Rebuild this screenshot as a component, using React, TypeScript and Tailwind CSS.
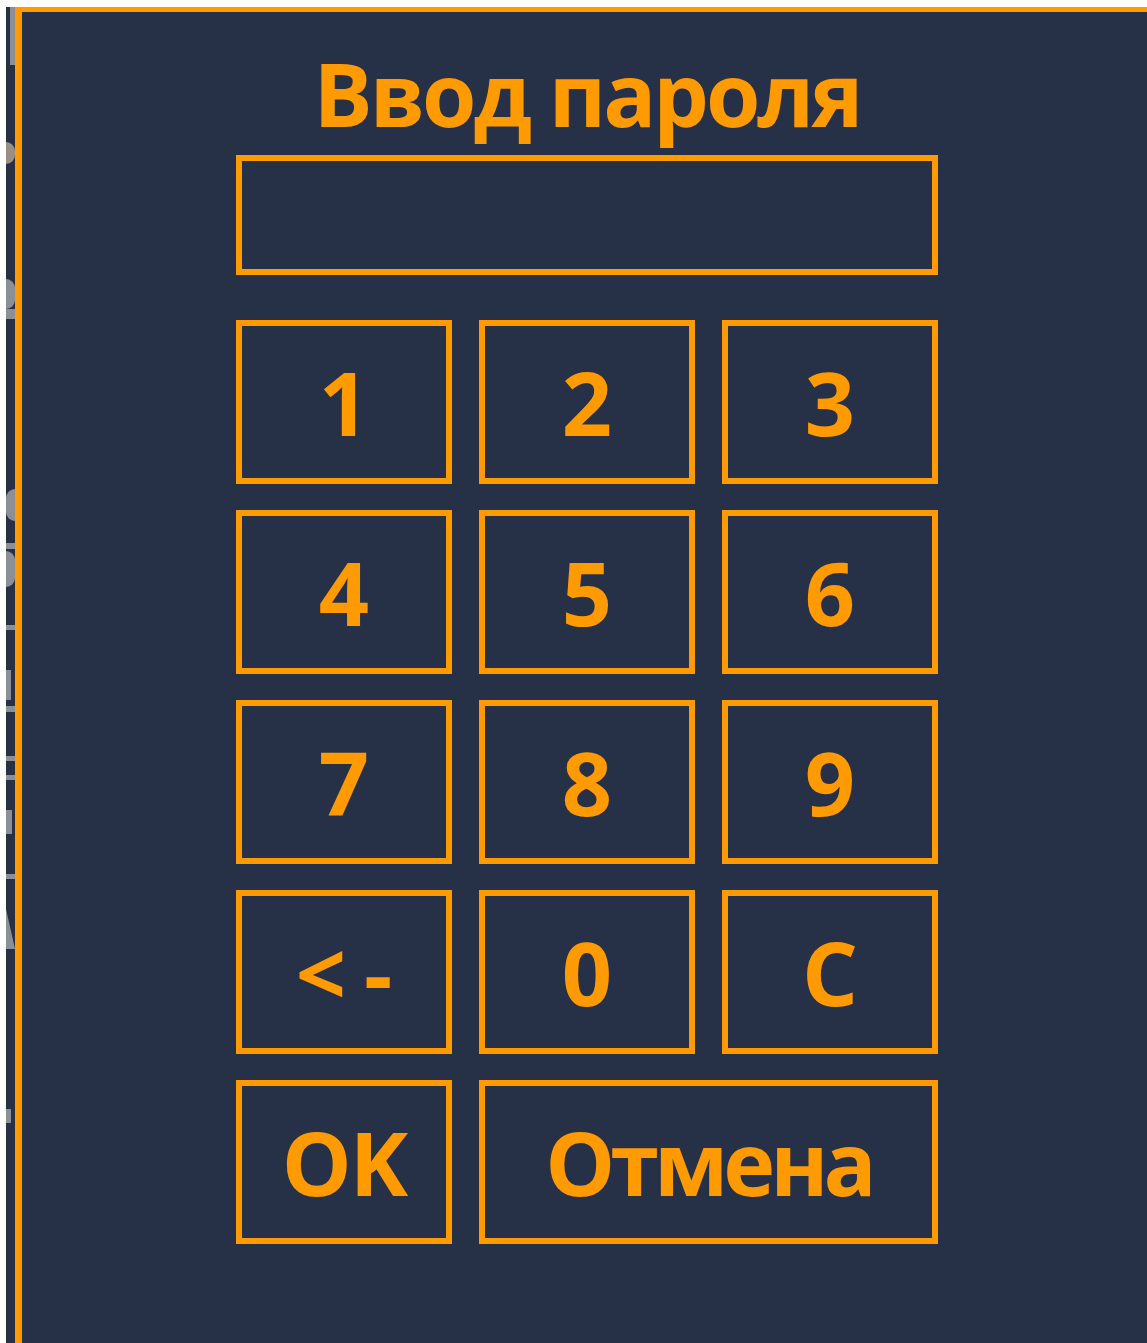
import React from 'react'

const keys = ['1', '2', '3', '4', '5', '6', '7', '8', '9', '<-', '0', 'C']

function Key({ label, className = '' }: { label: string; className?: string }) {
  return (
    <button
      type="button"
      className={`flex items-center justify-center h-[164px] border-[6px] border-[#ff9a00] bg-transparent text-[#ff9a00] text-[88px] font-bold leading-none ${className}`}
    >
      {label}
    </button>
  )
}

export default function App() {
  return (
    <div
      className="h-[1343px] overflow-hidden bg-white pt-[7px] pl-[6px]"
      style={{ fontFamily: '"Open Sans", "Noto Sans", sans-serif' }}
    >
      <div className="flex h-full">
        {/* clipped edge of the window behind the dialog */}
        <div className="relative w-[9px] shrink-0 overflow-hidden bg-[#263148]">
          <div className="absolute left-0 top-0 w-[12px] h-[1343px] flex flex-col items-start">
            <span className="block w-[5px] h-[58px] bg-[#8a8f98] ml-[4px]" />
            <span className="block w-[9px] h-[22px] rounded-r-full bg-[#9a8f88] mt-[77px]" />
            <span className="block w-[9px] h-[30px] rounded-r-full bg-[#8a8f98] mt-[115px]" />
            <span className="block w-[9px] h-[10px] bg-[#8a8f98]" />
            <span className="block w-[9px] h-[32px] rounded-l-full bg-[#8a8f98] mt-[170px]" />
            <span className="block w-[9px] h-[6px] bg-[#8a8f98] mt-[22px]" />
            <span className="block w-[9px] h-[36px] rounded-r-full bg-[#8a8f98] mt-[2px]" />
            <span className="block w-[9px] h-[5px] bg-[#8a8f98] mt-[38px]" />
            <span className="block w-[5px] h-[30px] bg-[#8a8f98] mt-[40px]" />
            <span className="block w-[9px] h-[6px] bg-[#8a8f98] mt-[6px]" />
            <span className="block w-[9px] h-[5px] bg-[#8a8f98] mt-[44px]" />
            <span className="block w-[9px] h-[5px] bg-[#8a8f98] mt-[14px]" />
            <span className="block w-[6px] h-[24px] bg-[#8a8f98] mt-[30px]" />
            <span className="block w-[9px] h-[5px] bg-[#8a8f98] mt-[40px]" />
            <span className="block w-[9px] h-[40px] bg-[#8a8f98] mt-[30px] [clip-path:polygon(0_0,100%_100%,0_100%)]" />
            <span className="block w-[5px] h-[14px] bg-[#8a8f98] mt-[160px]" />
          </div>
        </div>

        <div className="flex-1 bg-[#263148] border-l-[7px] border-t-[5px] border-[#ff9a00]">
          <div className="w-[702px] ml-[214px] pt-[37px] flex flex-col">
            <h1 className="text-center text-[88px] font-bold leading-none tracking-[-3px] text-[#ff9a00]">
              Ввод пароля
            </h1>

            <div className="mt-[18px] h-[120px] border-[6px] border-[#ff9a00]" />

            <div className="mt-[45px] grid grid-cols-3 gap-x-[27px] gap-y-[26px]">
              {keys.map((k) => (
                <Key key={k} label={k} className={k === '<-' ? 'tracking-[18px] pl-[18px]' : ''} />
              ))}
              <Key label="OK" className="tracking-[-2px]" />
              <Key label="Отмена" className="col-span-2 tracking-[-5px]" />
            </div>
          </div>
        </div>
      </div>
    </div>
  )
}
